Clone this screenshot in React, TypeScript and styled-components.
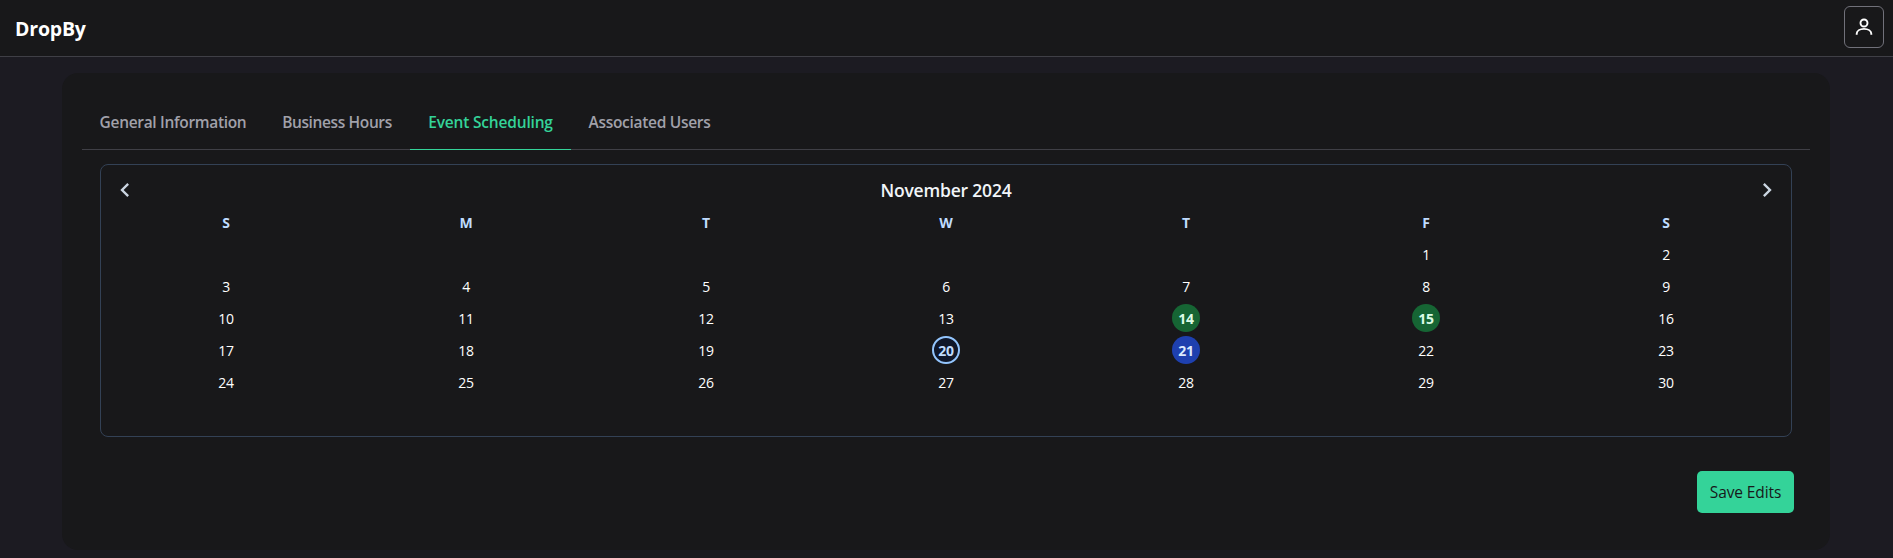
import React from 'react';
import styled, { createGlobalStyle, css } from 'styled-components';

const GlobalStyle = createGlobalStyle`
  * { box-sizing: border-box; }
  body {
    margin: 0;
    background: #1c1b22;
    color: #fff;
    font-family: 'Open Sans', 'Noto Sans', sans-serif;
    font-size: 15px;
    overflow: hidden;
  }
  button { font-family: inherit; cursor: pointer; padding: 0; }
`;

const Page = styled.div`
  min-height: 558px;
`;

const Header = styled.header`
  display: flex;
  align-items: center;
  justify-content: space-between;
  height: 57px;
  padding: 0 9px 2px 15px;
  background: #18181a;
  border-bottom: 1px solid #3f3f46;
`;

const Brand = styled.span`
  font-size: 19.5px;
  font-weight: 700;
  line-height: 28px;
  letter-spacing: -0.2px;
  padding-top: 4px;
`;

const UserButton = styled.button`
  display: flex;
  align-items: center;
  justify-content: center;
  width: 40px;
  height: 42px;
  background: transparent;
  border: 1px solid #71717a;
  border-radius: 6px;
  color: #fff;
`;

const Card = styled.main`
  margin: 16px 63px 0 62px;
  height: 477px;
  padding: 20px;
  background: #18181a;
  border-radius: 16px;
`;

const TabList = styled.nav`
  display: flex;
  height: 57px;
  border-bottom: 1px solid #3f3f46;
`;

const Tab = styled.button<{ $width: number; $active?: boolean; $spacing: number }>`
  width: ${(p) => p.$width}px;
  height: 57px;
  padding: 1px 0 0;
  background: transparent;
  border: 0;
  border-bottom: 1px solid ${(p) => (p.$active ? '#34d399' : '#3f3f46')};
  color: ${(p) => (p.$active ? '#34d399' : '#a1a1aa')};
  font-size: 15.5px;
  font-weight: 600;
  letter-spacing: ${(p) => p.$spacing}px;
  white-space: nowrap;
`;

const Calendar = styled.section`
  margin: 14px 18px 0;
  height: 273px;
  padding: 0 5px;
  border: 1px solid #334155;
  border-radius: 8px;
`;

const CalendarHeader = styled.div`
  display: flex;
  align-items: center;
  justify-content: space-between;
  height: 50px;
  padding: 0 5px;
`;

const CalendarTitle = styled.h2`
  margin: 0 0 1px;
  color: #f1f5f9;
  font-size: 17.5px;
  font-weight: 600;
  letter-spacing: -0.2px;
`;

const Arrow = styled.button`
  display: flex;
  align-items: center;
  justify-content: center;
  width: 28px;
  height: 30px;
  background: transparent;
  border: 0;
  color: #cbd5e1;
`;

const Week = styled.div`
  display: grid;
  grid-template-columns: repeat(7, 1fr);
  justify-items: center;
  height: 32px;
`;

const WeekdayRow = styled(Week)`
  height: 25px;
`;

const Weekday = styled.span`
  color: #bfdbfe;
  font-size: 14px;
  font-weight: 700;
  line-height: 16px;
`;

type Mark = 'booked' | 'today' | 'selected';

const marks = {
  booked: css`background: #166534; color: #dcfce7;`,
  selected: css`background: #1e40af; color: #dbeafe;`,
  today: css`background: #0f172a; color: #bfdbfe; border: 2px solid #93c5fd;`,
};

const Day = styled.span<{ $mark?: Mark }>`
  display: flex;
  align-items: center;
  justify-content: center;
  width: 28px;
  height: 28px;
  border-radius: 50%;
  font-size: 14px;
  letter-spacing: -0.3px;
  font-weight: ${(p) => (p.$mark ? 700 : 400)};
  ${(p) => p.$mark && marks[p.$mark]}
`;

const Actions = styled.div`
  display: flex;
  justify-content: flex-end;
  padding: 34px 16px 0 0;
`;

const SaveButton = styled.button`
  width: 97px;
  height: 42px;
  background: #34d399;
  border: 0;
  border-radius: 5px;
  color: #18181a;
  font-size: 15.5px;
  letter-spacing: -0.12px;
`;

const tabs = [
  { label: 'General Information', width: 182, spacing: -0.32 },
  { label: 'Business Hours', width: 146, spacing: -0.38 },
  { label: 'Event Scheduling', width: 161, spacing: -0.18, active: true },
  { label: 'Associated Users', width: 157, spacing: -0.3 },
];

const weekdays = ['S', 'M', 'T', 'W', 'T', 'F', 'S'];
const firstWeekday = 5;
const weeks = Array.from({ length: 5 }, (_, w) =>
  Array.from({ length: 7 }, (_, d) => w * 7 + d - firstWeekday + 1),
);
const markedDays: Record<number, Mark> = { 14: 'booked', 15: 'booked', 20: 'today', 21: 'selected' };

const UserIcon = () => (
  <svg width="18" height="18" viewBox="0 0 18 18" fill="none" stroke="currentColor" strokeWidth="1.9">
    <circle cx="9" cy="5" r="3.5" />
    <path d="M1.7 16.8v-1c0-2.9 3.2-4.9 7.3-4.9s7.3 2 7.3 4.9v1" />
  </svg>
);

const Chevron = ({ d }: { d: string }) => (
  <svg width="28" height="28" viewBox="0 0 24 24" fill="currentColor">
    <path d={d} />
  </svg>
);

export default function App() {
  return (
    <Page>
      <GlobalStyle />
      <Header>
        <Brand>DropBy</Brand>
        <UserButton aria-label="Account"><UserIcon /></UserButton>
      </Header>
      <Card>
        <TabList>
          {tabs.map((t) => (
            <Tab key={t.label} $width={t.width} $spacing={t.spacing} $active={t.active}>{t.label}</Tab>
          ))}
        </TabList>
        <Calendar>
          <CalendarHeader>
            <Arrow aria-label="Previous month">
              <Chevron d="M15.41 7.41L14 6l-6 6 6 6 1.41-1.41L10.83 12z" />
            </Arrow>
            <CalendarTitle>November 2024</CalendarTitle>
            <Arrow aria-label="Next month">
              <Chevron d="M8.59 16.59L10 18l6-6-6-6-1.41 1.41L13.17 12z" />
            </Arrow>
          </CalendarHeader>
          <WeekdayRow>
            {weekdays.map((d, i) => <Weekday key={i}>{d}</Weekday>)}
          </WeekdayRow>
          {weeks.map((week, w) => (
            <Week key={w}>
              {week.map((n) => (
                <Day key={n} $mark={markedDays[n]}>{n > 0 ? n : ''}</Day>
              ))}
            </Week>
          ))}
        </Calendar>
        <Actions>
          <SaveButton>Save Edits</SaveButton>
        </Actions>
      </Card>
    </Page>
  );
}
